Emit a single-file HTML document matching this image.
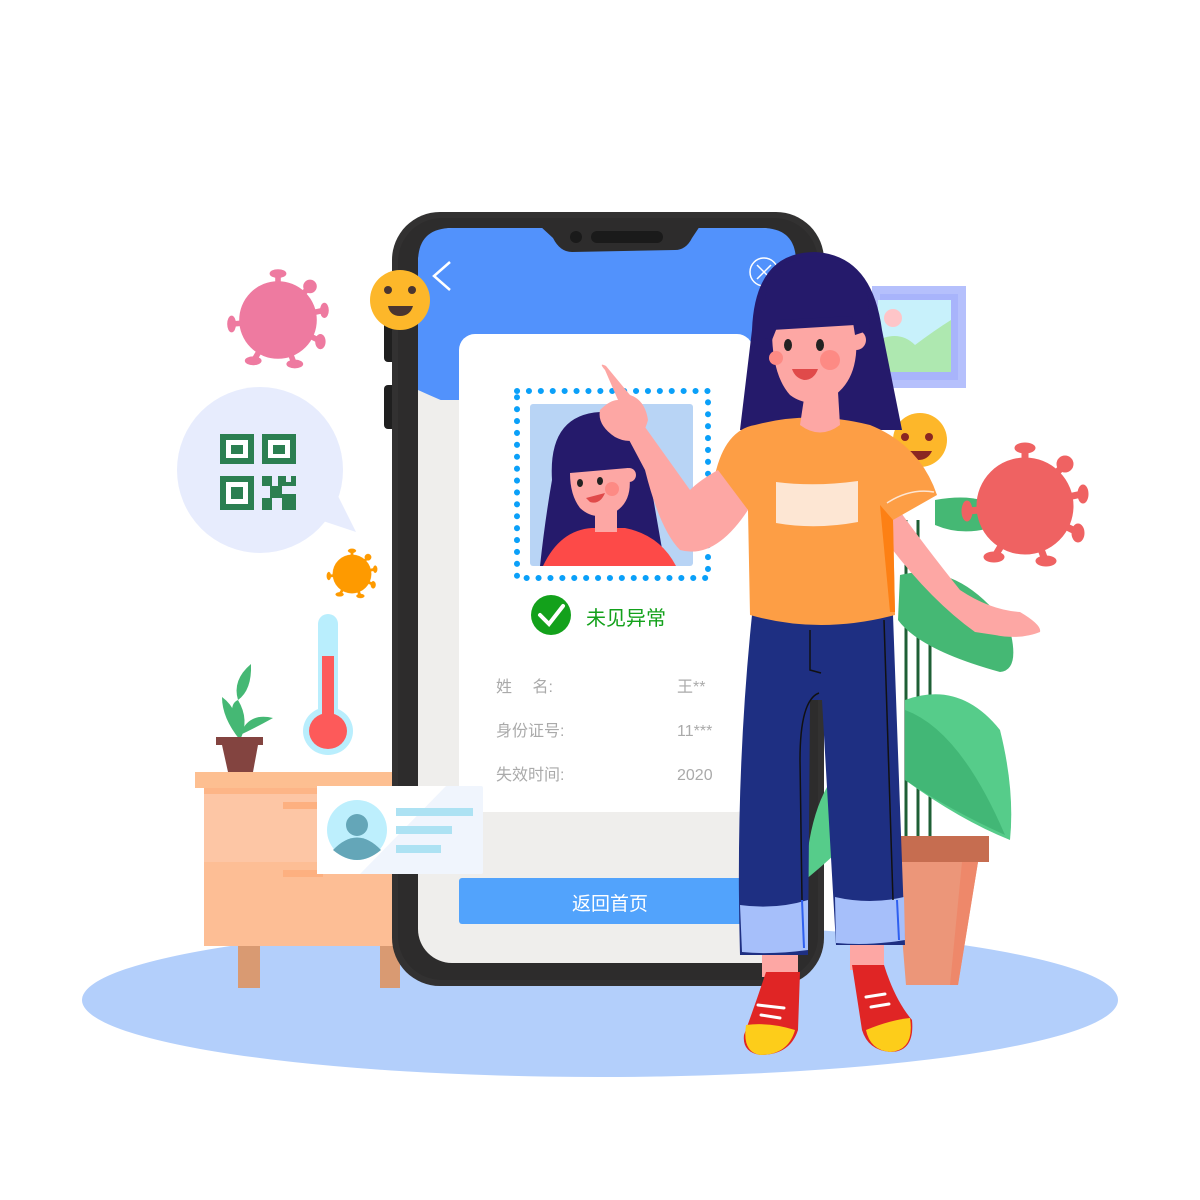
<!DOCTYPE html>
<html><head><meta charset="utf-8"><style>
html,body{margin:0;padding:0;background:#fff;}
svg{display:block}
text{font-family:"Liberation Sans","Noto Sans CJK SC",sans-serif}
</style></head><body>
<svg width="1200" height="1200" viewBox="0 0 1200 1200" xmlns="http://www.w3.org/2000/svg">
<defs>
<g id="vir">
  <g stroke-linecap="round">
    <line x1="0" y1="0" x2="0" y2="-58" stroke-width="7"/>
    <line x1="0" y1="0" x2="40" y2="-42" stroke-width="7"/>
    <line x1="0" y1="0" x2="57" y2="-12" stroke-width="7"/>
    <line x1="0" y1="0" x2="52" y2="26" stroke-width="7"/>
    <line x1="0" y1="0" x2="20" y2="54" stroke-width="7"/>
    <line x1="0" y1="0" x2="-30" y2="50" stroke-width="7"/>
    <line x1="0" y1="0" x2="-57" y2="5" stroke-width="7"/>
  </g>
  <circle r="48"/>
  <ellipse cx="0" cy="-58" rx="10" ry="5"/>
  <circle cx="40" cy="-42" r="8"/>
  <ellipse cx="58" cy="-12" rx="5" ry="9"/>
  <ellipse cx="53" cy="27" rx="6" ry="9"/>
  <ellipse cx="21" cy="55" rx="10" ry="5"/>
  <ellipse cx="-31" cy="51" rx="10" ry="5"/>
  <ellipse cx="-58" cy="5" rx="5" ry="10"/>
</g>
</defs>

<ellipse cx="600" cy="1000" rx="518" ry="77" fill="#b3cffb"/>

<g fill="#ee7aa0" stroke="#ee7aa0" transform="translate(278,320) scale(0.8)"><use href="#vir"/></g>
<g fill="#fe9a00" stroke="#fe9a00" transform="translate(352,574) scale(0.4)"><use href="#vir"/></g>

<ellipse cx="260" cy="470" rx="83" ry="83" fill="#e7ecfd"/>
<path d="M320,520 L356,532 L335,490 Z" fill="#e7ecfd"/>
<g fill="#2b7f51">
  <rect x="220" y="434" width="34" height="30"/><rect x="262" y="434" width="34" height="30"/><rect x="220" y="476" width="34" height="34"/>
</g>
<g fill="#fff"><rect x="226" y="440" width="22" height="18"/><rect x="268" y="440" width="22" height="18"/><rect x="226" y="482" width="22" height="22"/></g>
<g fill="#2b7f51"><rect x="231" y="445" width="12" height="9"/><rect x="273" y="445" width="12" height="9"/><rect x="231" y="487" width="12" height="12"/>
<rect x="262" y="476" width="10" height="10"/><rect x="278" y="476" width="18" height="10"/><rect x="270" y="486" width="12" height="12"/><rect x="262" y="498" width="10" height="12"/><rect x="282" y="494" width="14" height="16"/></g>
<rect x="286" y="476" width="5" height="6" fill="#e7ecfd"/>

<rect x="318" y="614" width="20" height="120" rx="10" fill="#b9eefd"/>
<ellipse cx="328" cy="731" rx="25" ry="24" fill="#b9eefd"/>
<rect x="322" y="656" width="12" height="70" fill="#fd5a5a"/>
<ellipse cx="328" cy="731" rx="19" ry="18" fill="#fd5a5a"/>

<path d="M240,740 Q225,705 238,700 Q250,720 240,740Z" fill="#45b874"/>
<path d="M238,700 Q232,680 251,664 Q252,690 238,700Z" fill="#45b874"/>
<path d="M240,740 Q222,718 222,697 Q240,710 240,740Z" fill="#45b874"/>
<path d="M240,735 Q248,712 273,718 Q255,728 240,735Z" fill="#45b874"/>
<rect x="216" y="737" width="47" height="8" fill="#834440"/>
<path d="M222,745 L258,745 L253,772 L228,772Z" fill="#834440"/>

<rect x="238" y="946" width="22" height="42" fill="#d99a72"/>
<rect x="380" y="946" width="20" height="42" fill="#d99a72"/>
<rect x="204" y="786" width="200" height="160" fill="#fdc6a5"/>
<rect x="204" y="862" width="200" height="84" fill="#fdbe95"/>
<rect x="195" y="772" width="210" height="16" fill="#fdbf91"/>
<rect x="204" y="788" width="200" height="6" fill="#fdb587"/>
<rect x="283" y="802" width="40" height="7" fill="#fdb080"/>
<rect x="283" y="870" width="40" height="7" fill="#fdb080"/>

<rect x="384" y="300" width="12" height="62" rx="4" fill="#1f1f1f"/>
<rect x="384" y="385" width="12" height="44" rx="4" fill="#1f1f1f"/>
<rect x="392" y="212" width="432" height="774" rx="48" fill="#323131"/>
<rect x="398" y="218" width="420" height="762" rx="44" fill="#2d2c2c"/>
<rect x="418" y="228" width="378" height="735" rx="34" fill="#efeeec"/>
<path d="M418,262 Q418,228 452,228 L762,228 Q796,228 796,262 L796,400 L418,400 Z" fill="#5292fc"/>
<path d="M418,390 Q440,400 460,408 L460,420 L418,420Z" fill="#efeeec"/>
<path d="M540,226 L553,238 Q560,252 572,252 L675,250 Q686,250 692,238 L700,226 Z" fill="#2d2c2c"/>
<circle cx="576" cy="237" r="6" fill="#1a1a1a"/>
<rect x="591" y="231" width="72" height="12" rx="6" fill="#1a1a1a"/>
<path d="M450,262 L434,276 L450,290" fill="none" stroke="#fff" stroke-width="2.5"/>
<circle cx="764" cy="272" r="14" fill="none" stroke="#fff" stroke-width="1.5"/>
<path d="M757,265 L771,279 M771,265 L757,279" stroke="#fff" stroke-width="1.5"/>

<rect x="459" y="334" width="294" height="478" rx="16" fill="#fff"/>
<rect x="517" y="391" width="191" height="187" fill="none" stroke="#0aa0f9" stroke-width="6" stroke-dasharray="0.1 11.8" stroke-linecap="round"/>
<rect x="530" y="404" width="163" height="162" rx="3" fill="#b8d4f5"/>
<path d="M552,480 Q548,415 600,412 Q650,416 650,480 L665,566 L540,566 Q545,520 552,480Z" fill="#251a6b"/>
<path d="M543,566 Q560,530 592,528 L625,528 Q660,535 676,566Z" fill="#fd4a48"/>
<rect x="595" y="510" width="22" height="22" fill="#fda7a4"/>
<path d="M570,473 L628,468 Q635,500 615,512 Q595,522 580,508 Q570,495 570,473Z" fill="#fda7a4"/>
<circle cx="629" cy="475" r="7" fill="#fda7a4"/>
<ellipse cx="580" cy="483" rx="3" ry="4" fill="#222"/><ellipse cx="600" cy="481" rx="3" ry="4" fill="#222"/>
<circle cx="612" cy="489" r="7" fill="#fd8a84"/>
<path d="M586,498 L605,493 Q600,505 590,502Z" fill="#e04a4a"/>

<circle cx="551" cy="615" r="20" fill="#13a11b"/>
<path d="M540,615 L549,624 L563,606" fill="none" stroke="#fff" stroke-width="4" stroke-linecap="round"/>
<text x="586" y="625" font-size="20" fill="#13a11b">未见异常</text>
<g font-size="16" fill="#aaa">
<text x="496" y="692">姓　 名:</text><text x="677" y="692">王**</text>
<text x="496" y="736">身份证号:</text><text x="677" y="736">11***</text>
<text x="496" y="780">失效时间:</text><text x="677" y="780">2020</text>
</g>
<rect x="459" y="878" width="294" height="46" rx="3" fill="#52a3fc"/>
<text x="610" y="910" font-size="19" fill="#fff" text-anchor="middle">返回首页</text>

<rect x="317" y="786" width="166" height="88" rx="2" fill="#f0f5fd"/>
<path d="M317,786 L446,786 L360,874 L317,874Z" fill="#fff"/>
<circle cx="357" cy="830" r="30" fill="#bdeffd"/>
<circle cx="357" cy="825" r="11" fill="#64a6b8"/>
<path d="M333,850 Q357,825 381,850 Q357,870 333,850Z" fill="#64a6b8"/>
<rect x="396" y="808" width="77" height="8" fill="#ade2f3"/>
<rect x="396" y="826" width="56" height="8" fill="#ade2f3"/>
<rect x="396" y="845" width="45" height="8" fill="#ade2f3"/>

<ellipse cx="400" cy="300" rx="30" ry="30" fill="#fdb72a"/>
<circle cx="388" cy="290" r="4" fill="#4a3530"/><circle cx="412" cy="290" r="4" fill="#4a3530"/>
<path d="M388,306 L413,306 Q410,316 400,316 Q390,316 388,306Z" fill="#4a3530"/>

<rect x="872" y="286" width="94" height="102" fill="#b5c0fc"/>
<rect x="880" y="294" width="78" height="86" fill="#a8b4fb"/>
<rect x="878" y="300" width="73" height="72" fill="#c8f1fb"/>
<path d="M878,340 Q900,330 915,345 Q935,330 951,320 L951,372 L878,372Z" fill="#aee8b0"/>
<circle cx="893" cy="318" r="9" fill="#fec5c8"/>

<circle cx="920" cy="440" r="27" fill="#fdb72a"/>
<circle cx="905" cy="437" r="4" fill="#8a2622"/><circle cx="929" cy="437" r="4" fill="#8a2622"/>
<path d="M908,451 L932,451 Q928,460 918,460 Q910,458 908,451Z" fill="#8a2622"/>

<g stroke="#1e5f35" stroke-width="3"><line x1="906" y1="520" x2="906" y2="840"/><line x1="918" y1="520" x2="918" y2="840"/><line x1="930" y1="620" x2="930" y2="840"/></g>
<path d="M935,500 Q990,490 1010,520 Q970,540 935,525Z" fill="#45b874"/>
<path d="M900,575 Q960,560 1010,630 Q1020,670 1000,672 Q920,650 898,620Z" fill="#45b874"/>
<path d="M905,700 Q960,680 1000,730 Q1015,790 1010,840 Q960,820 905,780Z" fill="#56cc8a"/>
<path d="M905,710 Q960,730 1005,835 Q950,810 905,780Z" fill="#42b776"/>
<path d="M805,880 Q810,790 850,760 L860,830 Q830,860 805,880Z" fill="#56cc8a"/>
<rect x="893" y="836" width="96" height="26" fill="#c66d50"/>
<path d="M896,862 L978,862 L958,985 L906,985Z" fill="#ec9679"/>
<path d="M962,862 L978,862 L958,985 L950,985Z" fill="#ee886a"/>

<g fill="#ef6262" stroke="#ef6262" transform="translate(1025,506)"><use href="#vir"/></g>

<path d="M752,330 Q755,252 815,252 Q872,255 882,330 L902,430 L740,430 Z" fill="#251a6b"/>
<rect x="762" y="945" width="36" height="32" fill="#fda7a4"/>
<rect x="850" y="940" width="34" height="30" fill="#fda7a4"/>
<path d="M766,972 L800,972 L798,1030 Q790,1055 760,1055 Q742,1052 744,1035 Q755,1005 766,972Z" fill="#e02525"/>
<path d="M746,1025 Q770,1022 795,1030 Q788,1055 760,1055 Q742,1052 746,1025Z" fill="#fdcd1a"/>
<path d="M852,965 L884,965 Q895,1000 912,1020 Q915,1052 890,1052 Q868,1050 862,1030Z" fill="#e02525"/>
<path d="M866,1030 Q890,1020 910,1018 Q915,1050 890,1052 Q870,1050 866,1030Z" fill="#fdcd1a"/>
<g stroke="#fff" stroke-width="3" stroke-linecap="round"><line x1="758" y1="1005" x2="784" y2="1008"/><line x1="761" y1="1015" x2="780" y2="1018"/><line x1="866" y1="997" x2="885" y2="994"/><line x1="871" y1="1007" x2="889" y2="1004"/></g>
<path d="M752,615 L893,615 L905,945 L836,945 L822,700 L810,700 L808,955 L740,955 Q735,780 752,615Z" fill="#1e2f82"/>
<path d="M740,905 Q775,910 808,900 L808,950 Q770,955 742,952Z" fill="#a6bffa"/>
<path d="M835,897 Q870,905 904,897 L905,940 Q870,946 836,943Z" fill="#a6bffa"/>
<line x1="802" y1="900" x2="804" y2="948" stroke="#2e5ff0" stroke-width="2"/>
<line x1="897" y1="900" x2="899" y2="940" stroke="#2e5ff0" stroke-width="2"/>
<path d="M819,693 Q800,700 800,760 L802,900" fill="none" stroke="#111" stroke-width="1.5"/>
<path d="M884,620 L893,900" fill="none" stroke="#111" stroke-width="1.5"/>
<path d="M810,630 L810,670 L821,673" fill="none" stroke="#111" stroke-width="1.5"/>
<path d="M892,500 Q920,540 960,590 Q990,610 1020,612 Q1042,625 1040,632 Q1020,640 995,635 L975,632 Q930,600 885,540Z" fill="#fda7a4"/>
<path d="M755,425 Q810,410 870,425 Q920,445 937,495 L893,520 L895,615 Q820,635 750,615 L748,510 L715,475 Q725,430 755,425Z" fill="#fd9e45"/>
<path d="M880,505 L893,520 L895,612 L890,612Z" fill="#fd8014"/>
<path d="M776,482 Q815,487 858,481 L858,522 Q815,530 776,523Z" fill="#fde6d3"/>
<path d="M887,503 Q910,488 934,492" fill="none" stroke="#fde6d3" stroke-width="1.5"/>
<path d="M718,470 L748,510 Q715,560 680,550 Q660,530 645,470 L628,438 L640,420 Q665,455 690,490 Q700,480 718,470Z" fill="#fda7a4"/>
<path d="M605,370 Q598,362 606,366 L630,395 Q645,400 648,420 Q640,450 615,437 Q597,425 600,410 Q610,400 618,400Z" fill="#fda7a4"/>
<path d="M805,392 L838,392 L840,425 Q820,440 800,425Z" fill="#fda7a4"/>
<path d="M772,330 L855,325 Q862,375 835,395 Q810,410 790,395 Q772,375 772,330Z" fill="#fda7a4"/>
<circle cx="856" cy="340" r="10" fill="#fda7a4"/>
<path d="M765,300 Q770,258 815,256 Q862,258 868,300 L870,330 L855,335 L852,316 L780,320 L772,340 L765,338Z" fill="#251a6b"/>
<ellipse cx="788" cy="345" rx="4" ry="6" fill="#222"/><ellipse cx="820" cy="345" rx="4" ry="6" fill="#222"/>
<circle cx="830" cy="360" r="10" fill="#fd8a84"/>
<circle cx="776" cy="358" r="7" fill="#fd8a84"/>
<path d="M792,369 L818,369 Q814,380 804,380 Q795,378 792,369Z" fill="#e04a4a"/>
</svg>
</body></html>
